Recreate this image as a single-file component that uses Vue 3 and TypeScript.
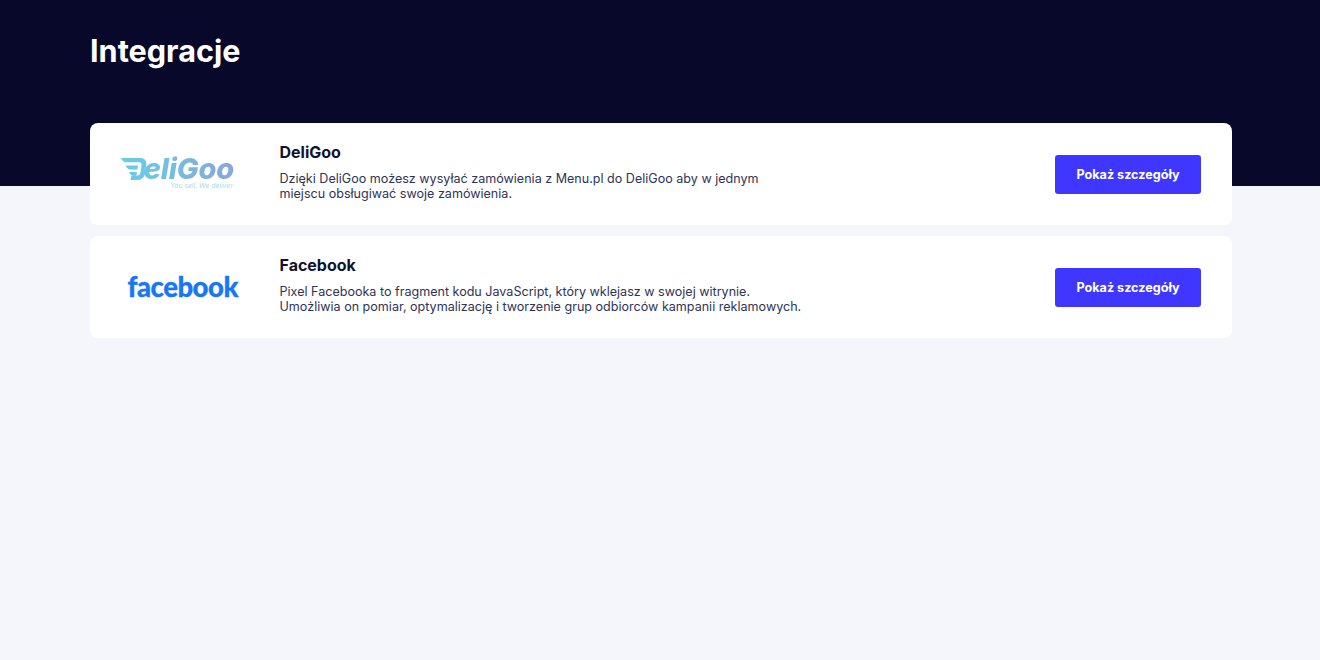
<script setup lang="ts">
interface Integration {
  id: string;
  name: string;
  lines: string[];
}

const integrations: Integration[] = [
  {
    id: 'deligoo',
    name: 'DeliGoo',
    lines: [
      'Dzięki DeliGoo możesz wysyłać zamówienia z Menu.pl do DeliGoo aby w jednym',
      'miejscu obsługiwać swoje zamówienia.',
    ],
  },
  {
    id: 'facebook',
    name: 'Facebook',
    lines: [
      'Pixel Facebooka to fragment kodu JavaScript, który wklejasz w swojej witrynie.',
      'Umożliwia on pomiar, optymalizację i tworzenie grup odbiorców kampanii reklamowych.',
    ],
  },
];
</script>

<template>
  <div class="page">
    <header class="hero">
      <h1 class="title">Integracje</h1>
    </header>
    <main class="list">
      <section v-for="item in integrations" :key="item.id" class="card">
        <div class="logo">
          <div v-if="item.id === 'deligoo'" class="deligoo">
            <div class="deligoo-mark">
              <svg class="wings" width="26" height="22" viewBox="0 0 26 22">
                <path d="M0 0h19c4.500 0 6.800 2.500 6.300 6.500l-1 8C23.800 19 21 22 16.500 22H9.500l1-4.500h5.500c2 0 3.200-1.200 3.500-3l1-7.500c.3-1.800-.6-2.800-2.500-2.800H5.500C3 4.700 1 2.500 0 0z" fill="#6cc8e4" />
                <path d="M4.500 7.500h12.500l-.6 4H9.500C7.200 11.500 5.500 9.800 4.500 7.500zM8 14h8l-.6 3.800h-3C10.300 17.800 8.800 16.200 8 14z" fill="#6cc8e4" />
              </svg>
              <span class="deligoo-text">eliGoo</span>
            </div>
            <span class="deligoo-tag">You sell, We deliver</span>
          </div>
          <span v-else class="facebook">facebook</span>
        </div>
        <div class="info">
          <h2 class="name">{{ item.name }}</h2>
          <p class="desc">
            <template v-for="line in item.lines" :key="line">{{ line }}<br /></template>
          </p>
        </div>
        <button class="details" type="button">Pokaż szczegóły</button>
      </section>
    </main>
  </div>
</template>

<style>
html,
body {
  margin: 0;
  background: #f4f6fb;
}
</style>

<style scoped>
.page {
  min-height: 660px;
  background: #f4f6fb;
  font-family: Inter, "Noto Sans", sans-serif;
}
.hero {
  height: 186px;
  box-sizing: border-box;
  padding: 31px 90px 0;
  background: #07082a;
}
.title {
  margin: 0;
  color: #fff;
  font-size: 30.600px;
  line-height: 40px;
  font-weight: 700;
}
.list {
  display: flex;
  flex-direction: column;
  gap: 10.500px;
  width: 1142px;
  margin: -63.500px 0 0 90px;
}
.card {
  display: flex;
  align-items: center;
  height: 102.500px;
  background: #fff;
  border-radius: 8px;
}
.logo {
  display: flex;
  flex: none;
  width: 189.500px;
  justify-content: center;
}
.deligoo {
  display: flex;
  flex-direction: column;
  width: 113px;
  margin-left: -15px;
}
.deligoo-mark {
  display: flex;
  align-items: center;
  height: 22px;
}
.wings {
  flex: none;
}
.deligoo-text {
  margin-left: -3px;
  padding-right: 2px;
  font-size: 29px;
  font-style: italic;
  font-weight: 800;
  line-height: 26px;
  letter-spacing: -0.2px;
  color: transparent;
  background: linear-gradient(90deg, #6cc8e4, #8aa6d8);
  -webkit-background-clip: text;
  background-clip: text;
}
.deligoo-tag {
  margin: 2px 1px 0 0;
  align-self: flex-end;
  font-size: 6.800px;
  font-style: italic;
  line-height: 8px;
  color: #a5dcec;
}
.facebook {
  margin-left: -4px;
  font-family: Lato, sans-serif;
  font-size: 27.500px;
  font-weight: 900;
  line-height: 30px;
  letter-spacing: -0.5px;
  color: #1877f2;
  -webkit-text-stroke: 0.3px #1877f2;
}
.info {
  flex: 1;
  margin-top: -4px;
}
.name {
  margin: 0 0 9px;
  font-size: 16px;
  line-height: 20px;
  font-weight: 700;
  color: #10122f;
}
.desc {
  margin: 0;
  font-size: 12.570px;
  line-height: 15px;
  color: #2f3358;
}
.details {
  flex: none;
  width: 146px;
  height: 39.500px;
  margin: 1px 31px 0 0;
  padding: 0;
  border: 0;
  border-radius: 3px;
  background: #3f37ff;
  color: #fff;
  font-family: inherit;
  font-size: 12.600px;
  font-weight: 700;
}
</style>
